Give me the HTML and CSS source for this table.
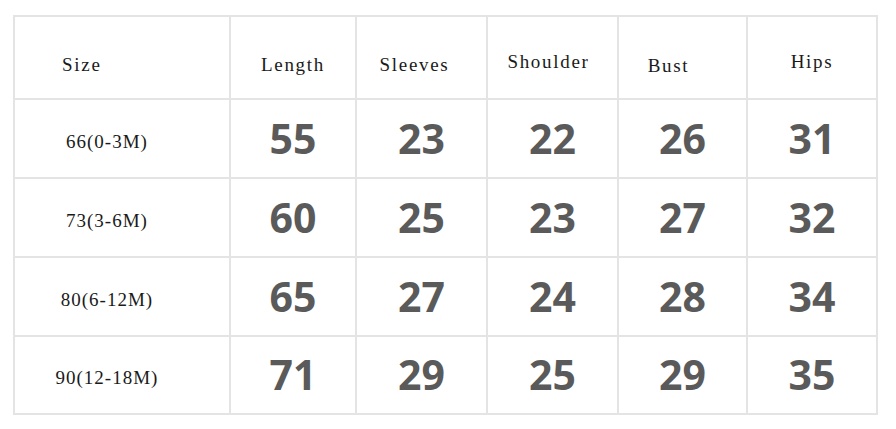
FILE: index.html
```html
<!DOCTYPE html>
<html>
<head>
<meta charset="utf-8">
<link rel="stylesheet" href="styles.css">
</head>
<body>
<div class="chart">
  <div class="cell head first"><span>Size</span></div>
  <div class="cell head"><span>Length</span></div>
  <div class="cell head"><span class="sh-l">Sleeves</span></div>
  <div class="cell head"><span class="up sh-s">Shoulder</span></div>
  <div class="cell head"><span class="sh-b">Bust</span></div>
  <div class="cell head"><span class="up">Hips</span></div>

  <div class="cell size"><span>66(0-3M)</span></div>
  <div class="cell num">55</div>
  <div class="cell num">23</div>
  <div class="cell num">22</div>
  <div class="cell num">26</div>
  <div class="cell num">31</div>

  <div class="cell size"><span>73(3-6M)</span></div>
  <div class="cell num">60</div>
  <div class="cell num">25</div>
  <div class="cell num">23</div>
  <div class="cell num">27</div>
  <div class="cell num">32</div>

  <div class="cell size"><span>80(6-12M)</span></div>
  <div class="cell num">65</div>
  <div class="cell num">27</div>
  <div class="cell num">24</div>
  <div class="cell num">28</div>
  <div class="cell num">34</div>

  <div class="cell size"><span>90(12-18M)</span></div>
  <div class="cell num">71</div>
  <div class="cell num">29</div>
  <div class="cell num">25</div>
  <div class="cell num">29</div>
  <div class="cell num">35</div>
</div>
</body>
</html>
```
FILE: styles.css
```css
html, body {
  margin: 0;
  padding: 0;
  background: #ffffff;
}
body {
  width: 896px;
  height: 429px;
  overflow: hidden;
}
.chart {
  margin: 15px 0 0 13px;
  display: inline-grid;
  grid-template-columns: 214px 124px 129px 129px 127px 128px;
  grid-template-rows: 81px 77px 77px 77px 76px;
  gap: 2px;
  padding: 2px;
  background: #e4e4e4;
}
.cell {
  background: #ffffff;
  display: flex;
  align-items: center;
  justify-content: center;
}
.head {
  font-family: "Liberation Serif", serif;
  font-size: 19px;
  letter-spacing: 1.7px;
  color: #1a1a1a;
  padding-top: 14px;
}
.head.first {
  justify-content: flex-start;
  padding-left: 47px;
}
.up {
  margin-top: -6px;
}
.sh-l { margin-right: 14px; }
.sh-s { margin-right: 8px; }
.sh-b { margin-right: 28px; margin-top: 2px; }
.size {
  font-family: "Liberation Serif", serif;
  font-size: 19px;
  letter-spacing: 1px;
  color: #1a1a1a;
  padding-right: 30px;
  padding-top: 6px;
}
.num {
  font-family: "Open Sans", sans-serif;
  font-weight: 700;
  font-size: 41px;
  color: #5a5a5a;
  padding-bottom: 2px;
}
```
